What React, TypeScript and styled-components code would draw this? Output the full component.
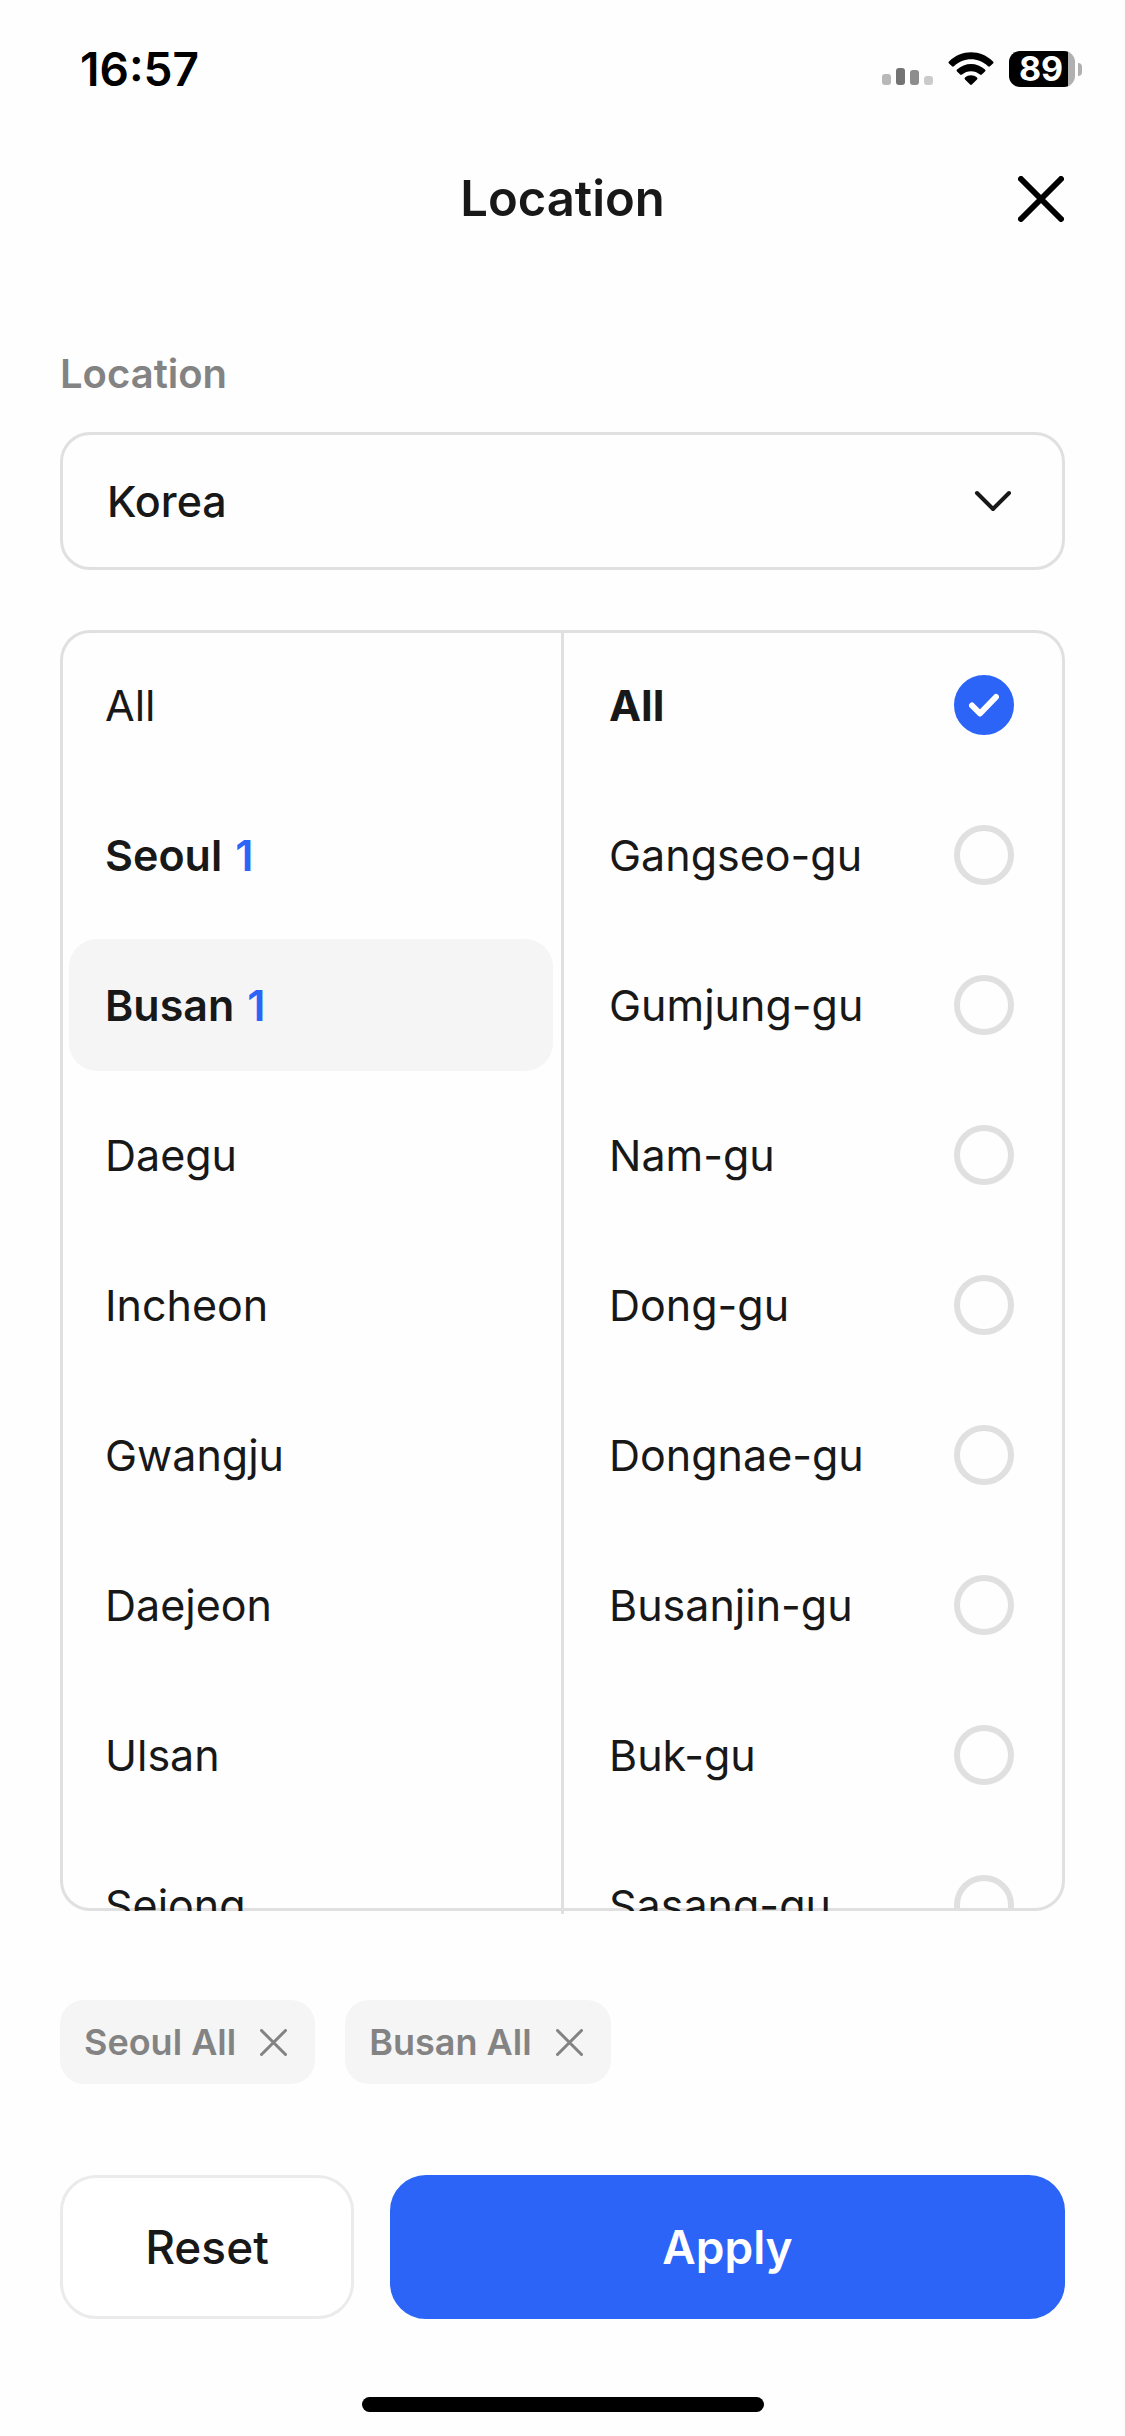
import { useState } from "react";
import styled, { createGlobalStyle } from "styled-components";

const color = {
  ink: "#181818",
  muted: "#838383",
  line: "#e0e0e0",
  fill: "#f5f5f5",
  accent: "#2b64f6",
};

const GlobalStyle = createGlobalStyle`
  *, *::before, *::after { box-sizing: border-box; }
  body { margin: 0; background: #fefefe; }
  body, button, select, input {
    font-family: Inter, "Liberation Sans", sans-serif;
    color: ${color.ink};
  }
  button { border: 0; padding: 0; background: none; cursor: pointer; }
`;

const Screen = styled.div`
  display: flex;
  flex-direction: column;
  height: 100vh;
  min-height: 1400px;
`;

const StatusBar = styled.div`
  display: flex;
  flex: none;
  align-items: center;
  justify-content: space-between;
  height: 138px;
  padding: 0 43px 0 80px;
`;

const Clock = styled.time`
  font-size: 46px;
  line-height: 56px;
  font-weight: 600;
  color: #000;
`;

const StatusIcons = styled.div`
  display: flex;
  align-items: center;
  gap: 15px;
`;

const Battery = styled.div`
  display: flex;
  align-items: center;
  gap: 3px;
`;

const BatteryBody = styled.div`
  display: flex;
  align-items: center;
  justify-content: center;
  width: 66px;
  height: 36px;
  padding-right: 2px;
  border-radius: 11px;
  background: linear-gradient(to right, #000 59px, #b0b0b0 59px);
  color: #fff;
  font-size: 34px;
  line-height: 36px;
  font-weight: 700;
`;

const BatteryCap = styled.span`
  width: 4px;
  height: 13px;
  border-radius: 0 4px 4px 0;
  background: #b0b0b0;
`;

const Header = styled.header`
  display: grid;
  flex: none;
  grid-template-columns: 48px 1fr 48px;
  align-items: center;
  height: 122px;
  padding: 0 60px;
`;

const Title = styled.h1`
  grid-column: 2;
  margin: 0;
  text-align: center;
  font-size: 49px;
  line-height: 60px;
  font-weight: 600;
`;

const CloseButton = styled.button`
  display: flex;
  align-items: center;
  justify-content: center;
  height: 48px;
  color: #000;
`;

const Content = styled.main`
  display: flex;
  flex: 1;
  flex-direction: column;
  min-height: 0;
  padding: 90px 60px 0;
`;

const FieldLabel = styled.label`
  margin-bottom: 34px;
  font-size: 40px;
  line-height: 48px;
  font-weight: 600;
  color: ${color.muted};
`;

const SelectBox = styled.div`
  display: grid;
  flex: none;
  align-items: center;
  margin-bottom: 60px;

  > * { grid-area: 1 / 1; }
  > svg { justify-self: end; margin-right: 51px; pointer-events: none; }
`;

const CountrySelect = styled.select`
  appearance: none;
  width: 100%;
  height: 138px;
  padding: 0 108px 0 44px;
  border: 3px solid ${color.line};
  border-radius: 30px;
  background: transparent;
  font-size: 43px;
  font-weight: 500;
`;

const Picker = styled.div`
  display: grid;
  flex: 1;
  grid-template-columns: 1fr 3px 1fr;
  grid-template-rows: minmax(0, 1fr);
  min-height: 0;
  border-radius: 30px;
  box-shadow: inset 0 0 0 3px ${color.line};
`;

const Divider = styled.div`
  margin: 3px 0 -3px;
  background: ${color.line};
`;

const OptionList = styled.ul`
  display: flex;
  flex-direction: column;
  gap: 18px;
  margin: 0;
  padding: 9px 8px 9px 9px;
  list-style: none;
  overflow-y: auto;
  scrollbar-width: none;
`;

const RegionButton = styled.button<{ $current: boolean; $strong: boolean }>`
  display: flex;
  align-items: center;
  gap: 13px;
  width: 100%;
  height: 132px;
  padding: 0 36px;
  border-radius: 28px;
  background: ${(p) => (p.$current ? color.fill : "transparent")};
  font-size: 43px;
  line-height: 56px;
  font-weight: ${(p) => (p.$strong ? 600 : 400)};
`;

const Count = styled.span`
  color: ${color.accent};
`;

const DistrictLabel = styled.label<{ $strong: boolean }>`
  display: flex;
  align-items: center;
  justify-content: space-between;
  height: 132px;
  padding: 0 43px 0 36px;
  cursor: pointer;
  font-size: 43px;
  line-height: 56px;
  font-weight: ${(p) => (p.$strong ? 700 : 400)};
`;

const CheckWrap = styled.span`
  display: grid;
  place-items: center;

  > * { grid-area: 1 / 1; }
  > svg { pointer-events: none; }
`;

const CheckInput = styled.input`
  appearance: none;
  width: 60px;
  height: 60px;
  margin: 0;
  border: 6px solid ${color.line};
  border-radius: 50%;

  &:checked {
    border-color: ${color.accent};
    background: ${color.accent};
  }
`;

const Chips = styled.div`
  display: flex;
  flex: none;
  gap: 30px;
  height: 84px;
  margin-top: 89px;
`;

const Chip = styled.span`
  display: flex;
  align-items: center;
  gap: 24px;
  padding: 0 28px 0 24px;
  border-radius: 24px;
  background: ${color.fill};
  color: ${color.muted};
  font-size: 36px;
  line-height: 44px;
  font-weight: 600;
`;

const ChipRemove = styled.button`
  display: flex;
  color: ${color.muted};
`;

const Actions = styled.footer`
  display: flex;
  flex: none;
  gap: 36px;
  padding: 91px 60px 78px;
`;

const ActionButton = styled.button<{ $primary?: boolean }>`
  flex: ${(p) => (p.$primary ? "1" : "0 0 294px")};
  height: 144px;
  border: 3px solid ${(p) => (p.$primary ? color.accent : "#ebebeb")};
  border-radius: 36px;
  background: ${(p) => (p.$primary ? color.accent : "#fff")};
  color: ${(p) => (p.$primary ? "#fff" : color.ink)};
  font-size: 46px;
  line-height: 56px;
  font-weight: ${(p) => (p.$primary ? 600 : 500)};
`;

const HomeIndicator = styled.div`
  flex: none;
  align-self: center;
  width: 402px;
  height: 15px;
  margin-bottom: 24px;
  border-radius: 8px;
  background: #000;
`;

const SignalIcon = () => (
  <svg width="51" height="36" viewBox="0 0 51 36" aria-hidden="true">
    <rect x="0" y="23" width="9" height="11" rx="3" fill="#b8b8b8" />
    <rect x="14" y="17" width="9" height="17" rx="3" fill="#737373" />
    <rect x="28" y="19" width="9" height="15" rx="3" fill="#8d8d8d" />
    <rect x="42" y="25" width="9" height="9" rx="3" fill="#cbcbcb" />
  </svg>
);

const WifiIcon = () => (
  <svg width="46" height="36" viewBox="0 0 46 36" aria-hidden="true">
    <path d="M1 10.5C13.500-1.700 32.500-1.700 45 10.500Q46 11.500 45 12.500L42 15.300Q41 16 40 15.200C30.500 6 15.500 6 6 15.200Q5 16 4 15.300L1 12.500Q0 11.500 1 10.500Z" />
    <path d="M9 18.500C17 11 29 11 37 18.500Q38 19.500 37 20.500L33.800 23.600Q33 24.300 32 23.500C27 19 19 19 14 23.500Q13 24.300 12.200 23.600L9 20.500Q8 19.500 9 18.500Z" />
    <path d="M17 26.500C20.500 23.500 25.500 23.500 29 26.500Q30 27.400 29 28.400L23.900 33.600Q23 34.400 22.100 33.600L17 28.400Q16 27.400 17 26.500Z" />
  </svg>
);

const CrossIcon = ({ size, stroke }: { size: number; stroke: number }) => {
  const near = stroke / 2;
  const far = size - near;
  return (
    <svg
      width={size}
      height={size}
      viewBox={`0 0 ${size} ${size}`}
      fill="none"
      stroke="currentColor"
      strokeWidth={stroke}
      strokeLinecap="round"
      aria-hidden="true"
    >
      <path d={`M${near} ${near}L${far} ${far}M${far} ${near}L${near} ${far}`} />
    </svg>
  );
};

const ChevronIcon = () => (
  <svg width="42" height="42" viewBox="0 0 42 42" fill="none" stroke={color.ink} strokeWidth="4" strokeLinecap="round" strokeLinejoin="round" aria-hidden="true">
    <path d="M5 13L21 29L37 13" />
  </svg>
);

const CheckIcon = () => (
  <svg width="30" height="24" viewBox="0 0 30 24" fill="none" stroke="#fff" strokeWidth="6" strokeLinecap="round" strokeLinejoin="round" aria-hidden="true">
    <path d="M3 12.500L11 20.500L27 4" />
  </svg>
);

const regions = ["All", "Seoul", "Busan", "Daegu", "Incheon", "Gwangju", "Daejeon", "Ulsan", "Sejong"];
const districts = ["All", "Gangseo-gu", "Gumjung-gu", "Nam-gu", "Dong-gu", "Dongnae-gu", "Busanjin-gu", "Buk-gu", "Sasang-gu"];

export default function App() {
  const [current, setCurrent] = useState("Busan");
  const [picked, setPicked] = useState<Record<string, string[]>>({ Seoul: ["All"], Busan: ["All"] });

  const toggle = (region: string, district: string) =>
    setPicked((prev) => {
      const list = prev[region] ?? [];
      const next = list.includes(district) ? list.filter((d) => d !== district) : [...list, district];
      return { ...prev, [region]: next };
    });

  return (
    <Screen>
      <GlobalStyle />
      <StatusBar>
        <Clock>16:57</Clock>
        <StatusIcons>
          <SignalIcon />
          <WifiIcon />
          <Battery>
            <BatteryBody>89</BatteryBody>
            <BatteryCap />
          </Battery>
        </StatusIcons>
      </StatusBar>

      <Header>
        <Title>Location</Title>
        <CloseButton type="button" aria-label="Close">
          <CrossIcon size={46} stroke={6} />
        </CloseButton>
      </Header>

      <Content>
        <FieldLabel htmlFor="country">Location</FieldLabel>
        <SelectBox>
          <CountrySelect id="country" defaultValue="Korea">
            <option>Korea</option>
          </CountrySelect>
          <ChevronIcon />
        </SelectBox>

        <Picker>
          <OptionList>
            {regions.map((name) => {
              const count = picked[name]?.length ?? 0;
              return (
                <li key={name}>
                  <RegionButton
                    type="button"
                    $current={name === current}
                    $strong={count > 0}
                    aria-pressed={name === current}
                    onClick={() => setCurrent(name)}
                  >
                    {name}
                    {count > 0 && <Count>{count}</Count>}
                  </RegionButton>
                </li>
              );
            })}
          </OptionList>
          <Divider />
          <OptionList>
            {districts.map((name) => {
              const checked = (picked[current] ?? []).includes(name);
              const id = `district-${name}`;
              return (
                <li key={name}>
                  <DistrictLabel htmlFor={id} $strong={checked}>
                    {name}
                    <CheckWrap>
                      <CheckInput id={id} type="checkbox" checked={checked} onChange={() => toggle(current, name)} />
                      {checked && <CheckIcon />}
                    </CheckWrap>
                  </DistrictLabel>
                </li>
              );
            })}
          </OptionList>
        </Picker>

        <Chips>
          {Object.entries(picked).flatMap(([region, list]) =>
            list.map((district) => (
              <Chip key={`${region}-${district}`}>
                {region} {district}
                <ChipRemove
                  type="button"
                  aria-label={`Remove ${region} ${district}`}
                  onClick={() => toggle(region, district)}
                >
                  <CrossIcon size={27} stroke={3} />
                </ChipRemove>
              </Chip>
            )),
          )}
        </Chips>
      </Content>

      <Actions>
        <ActionButton type="button" onClick={() => setPicked({})}>
          Reset
        </ActionButton>
        <ActionButton type="button" $primary>
          Apply
        </ActionButton>
      </Actions>
      <HomeIndicator />
    </Screen>
  );
}
